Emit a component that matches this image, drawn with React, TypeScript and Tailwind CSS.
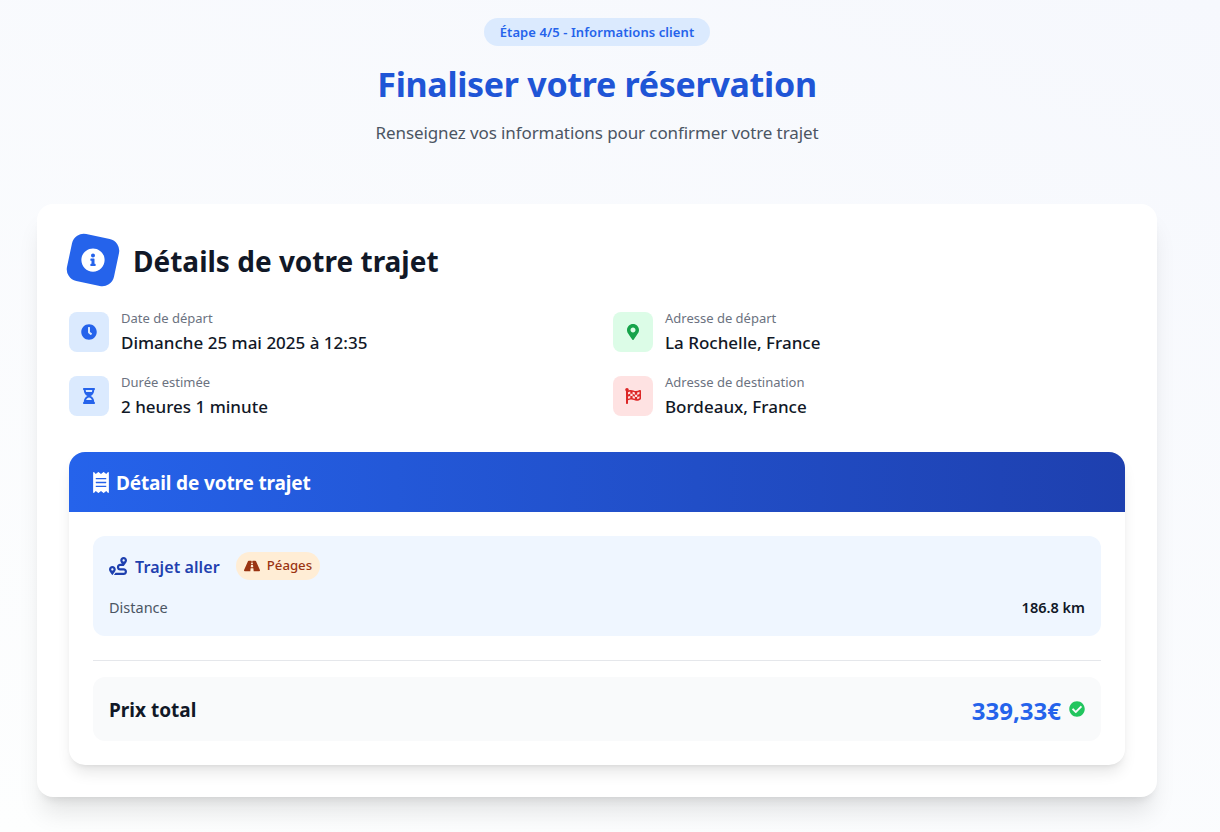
import {
  FaCheckCircle,
  FaClock,
  FaFlagCheckered,
  FaHourglassHalf,
  FaInfoCircle,
  FaMapMarkerAlt,
  FaReceipt,
  FaRoad,
  FaRoute,
} from "react-icons/fa";
import type { ReactNode } from "react";

const InfoItem = ({
  icon,
  box,
  label,
  value,
}: {
  icon: ReactNode;
  box: string;
  label: string;
  value: string;
}) => (
  <div className="flex items-start gap-3">
    <div className={`w-10 h-10 rounded-lg flex items-center justify-center ${box}`}>
      {icon}
    </div>
    <div>
      <p className="text-[13px] leading-[12px] text-[#6b7280]">{label}</p>
      <p className="text-[17px] leading-[18px] mt-[10px] font-medium text-[#111827]">{value}</p>
    </div>
  </div>
);

export default function App() {
  return (
    <div className="h-[832px] overflow-hidden bg-[linear-gradient(200deg,#f6f8fd,#fdfefe)] font-['Noto_Sans','Open_Sans',sans-serif]">
      <div className="w-[1194px] px-[37px] pt-[18px]">
        {/* Header */}
        <div className="flex flex-col items-center">
          <span className="h-7 pt-[2px] px-4 rounded-full bg-[#dbeafe] text-[#2563eb] text-[13px] tracking-[0.08px] font-semibold flex items-center">
            Étape 4/5 - Informations client
          </span>
          <h1 className="mt-[14px] text-[34px] tracking-[-0.3px] leading-[48px] font-bold text-[#1f55d6]">
            Finaliser votre réservation
          </h1>
          <p className="mt-[13px] text-[17px] tracking-[-0.1px] leading-6 text-[#4b5563]">
            Renseignez vos informations pour confirmer votre trajet
          </p>
        </div>

        {/* Card */}
        <div className="mt-[59px] bg-white rounded-2xl shadow-xl p-8">
          <div className="flex items-center gap-4 h-12">
            <div className="w-12 h-12 rounded-xl bg-[#2563eb] rotate-12 flex items-center justify-center">
              <FaInfoCircle className="text-white text-2xl -rotate-12" />
            </div>
            <h2 className="pt-[2px] text-[28px] font-bold text-[#111827]">Détails de votre trajet</h2>
          </div>

          <div className="mt-7 grid grid-cols-2 gap-x-8 gap-y-6">
            <InfoItem
              box="bg-[#dbeafe]"
              icon={<FaClock className="text-[#2563eb] text-base" />}
              label="Date de départ"
              value="Dimanche 25 mai 2025 à 12:35"
            />
            <InfoItem
              box="bg-[#dcfce7]"
              icon={<FaMapMarkerAlt className="text-[#16a34a] text-base" />}
              label="Adresse de départ"
              value="La Rochelle, France"
            />
            <InfoItem
              box="bg-[#dbeafe]"
              icon={<FaHourglassHalf className="text-[#2563eb] text-base" />}
              label="Durée estimée"
              value="2 heures 1 minute"
            />
            <InfoItem
              box="bg-[#fee2e2]"
              icon={<FaFlagCheckered className="text-[#dc2626] text-base" />}
              label="Adresse de destination"
              value="Bordeaux, France"
            />
          </div>

          {/* Price breakdown */}
          <div className="mt-9 rounded-2xl bg-white shadow-lg overflow-hidden">
            <div className="h-[60px] px-6 flex items-center gap-[7px] bg-gradient-to-r from-[#2563eb] to-[#1e40af] text-white">
              <FaReceipt className="w-4 h-[21px]" />
              <h3 className="pt-[2px] text-[19px] tracking-[-0.15px] font-bold">Détail de votre trajet</h3>
            </div>
            <div className="p-6">
              <div className="h-[100px] rounded-xl bg-[#eff6ff] p-4">
                <div className="flex items-center gap-4 h-7">
                  <div className="flex items-center gap-2 text-[#1e40af]">
                    <FaRoute className="text-[18px]" />
                    <span className="pt-[2px] text-[16px] tracking-[0.1px] font-semibold">Trajet aller</span>
                  </div>
                  <span className="h-7 px-2 rounded-full bg-[#ffedd5] text-[#9a3412] text-[13.2px] font-medium flex items-center gap-[7px]">
                    <FaRoad className="text-[16px]" />
                    Péages
                  </span>
                </div>
                <div className="mt-4 flex justify-between items-center h-6">
                  <span className="text-[14.5px] text-[#4b5563]">Distance</span>
                  <span className="text-[14.5px] font-semibold text-[#111827]">186.8 km</span>
                </div>
              </div>
              <div className="mt-6 border-t border-[#e5e7eb]" />
              <div className="mt-4 h-16 rounded-xl bg-[#f9fafb] px-4 flex items-center justify-between">
                <span className="pt-[3px] text-[19px] font-bold text-[#111827]">Prix total</span>
                <span className="flex items-center gap-2">
                  <span className="pt-[4px] text-[24px] font-bold text-[#2563eb]">339,33€</span>
                  <FaCheckCircle className="text-[#22c55e] text-base" />
                </span>
              </div>
            </div>
          </div>
        </div>
      </div>
    </div>
  );
}
